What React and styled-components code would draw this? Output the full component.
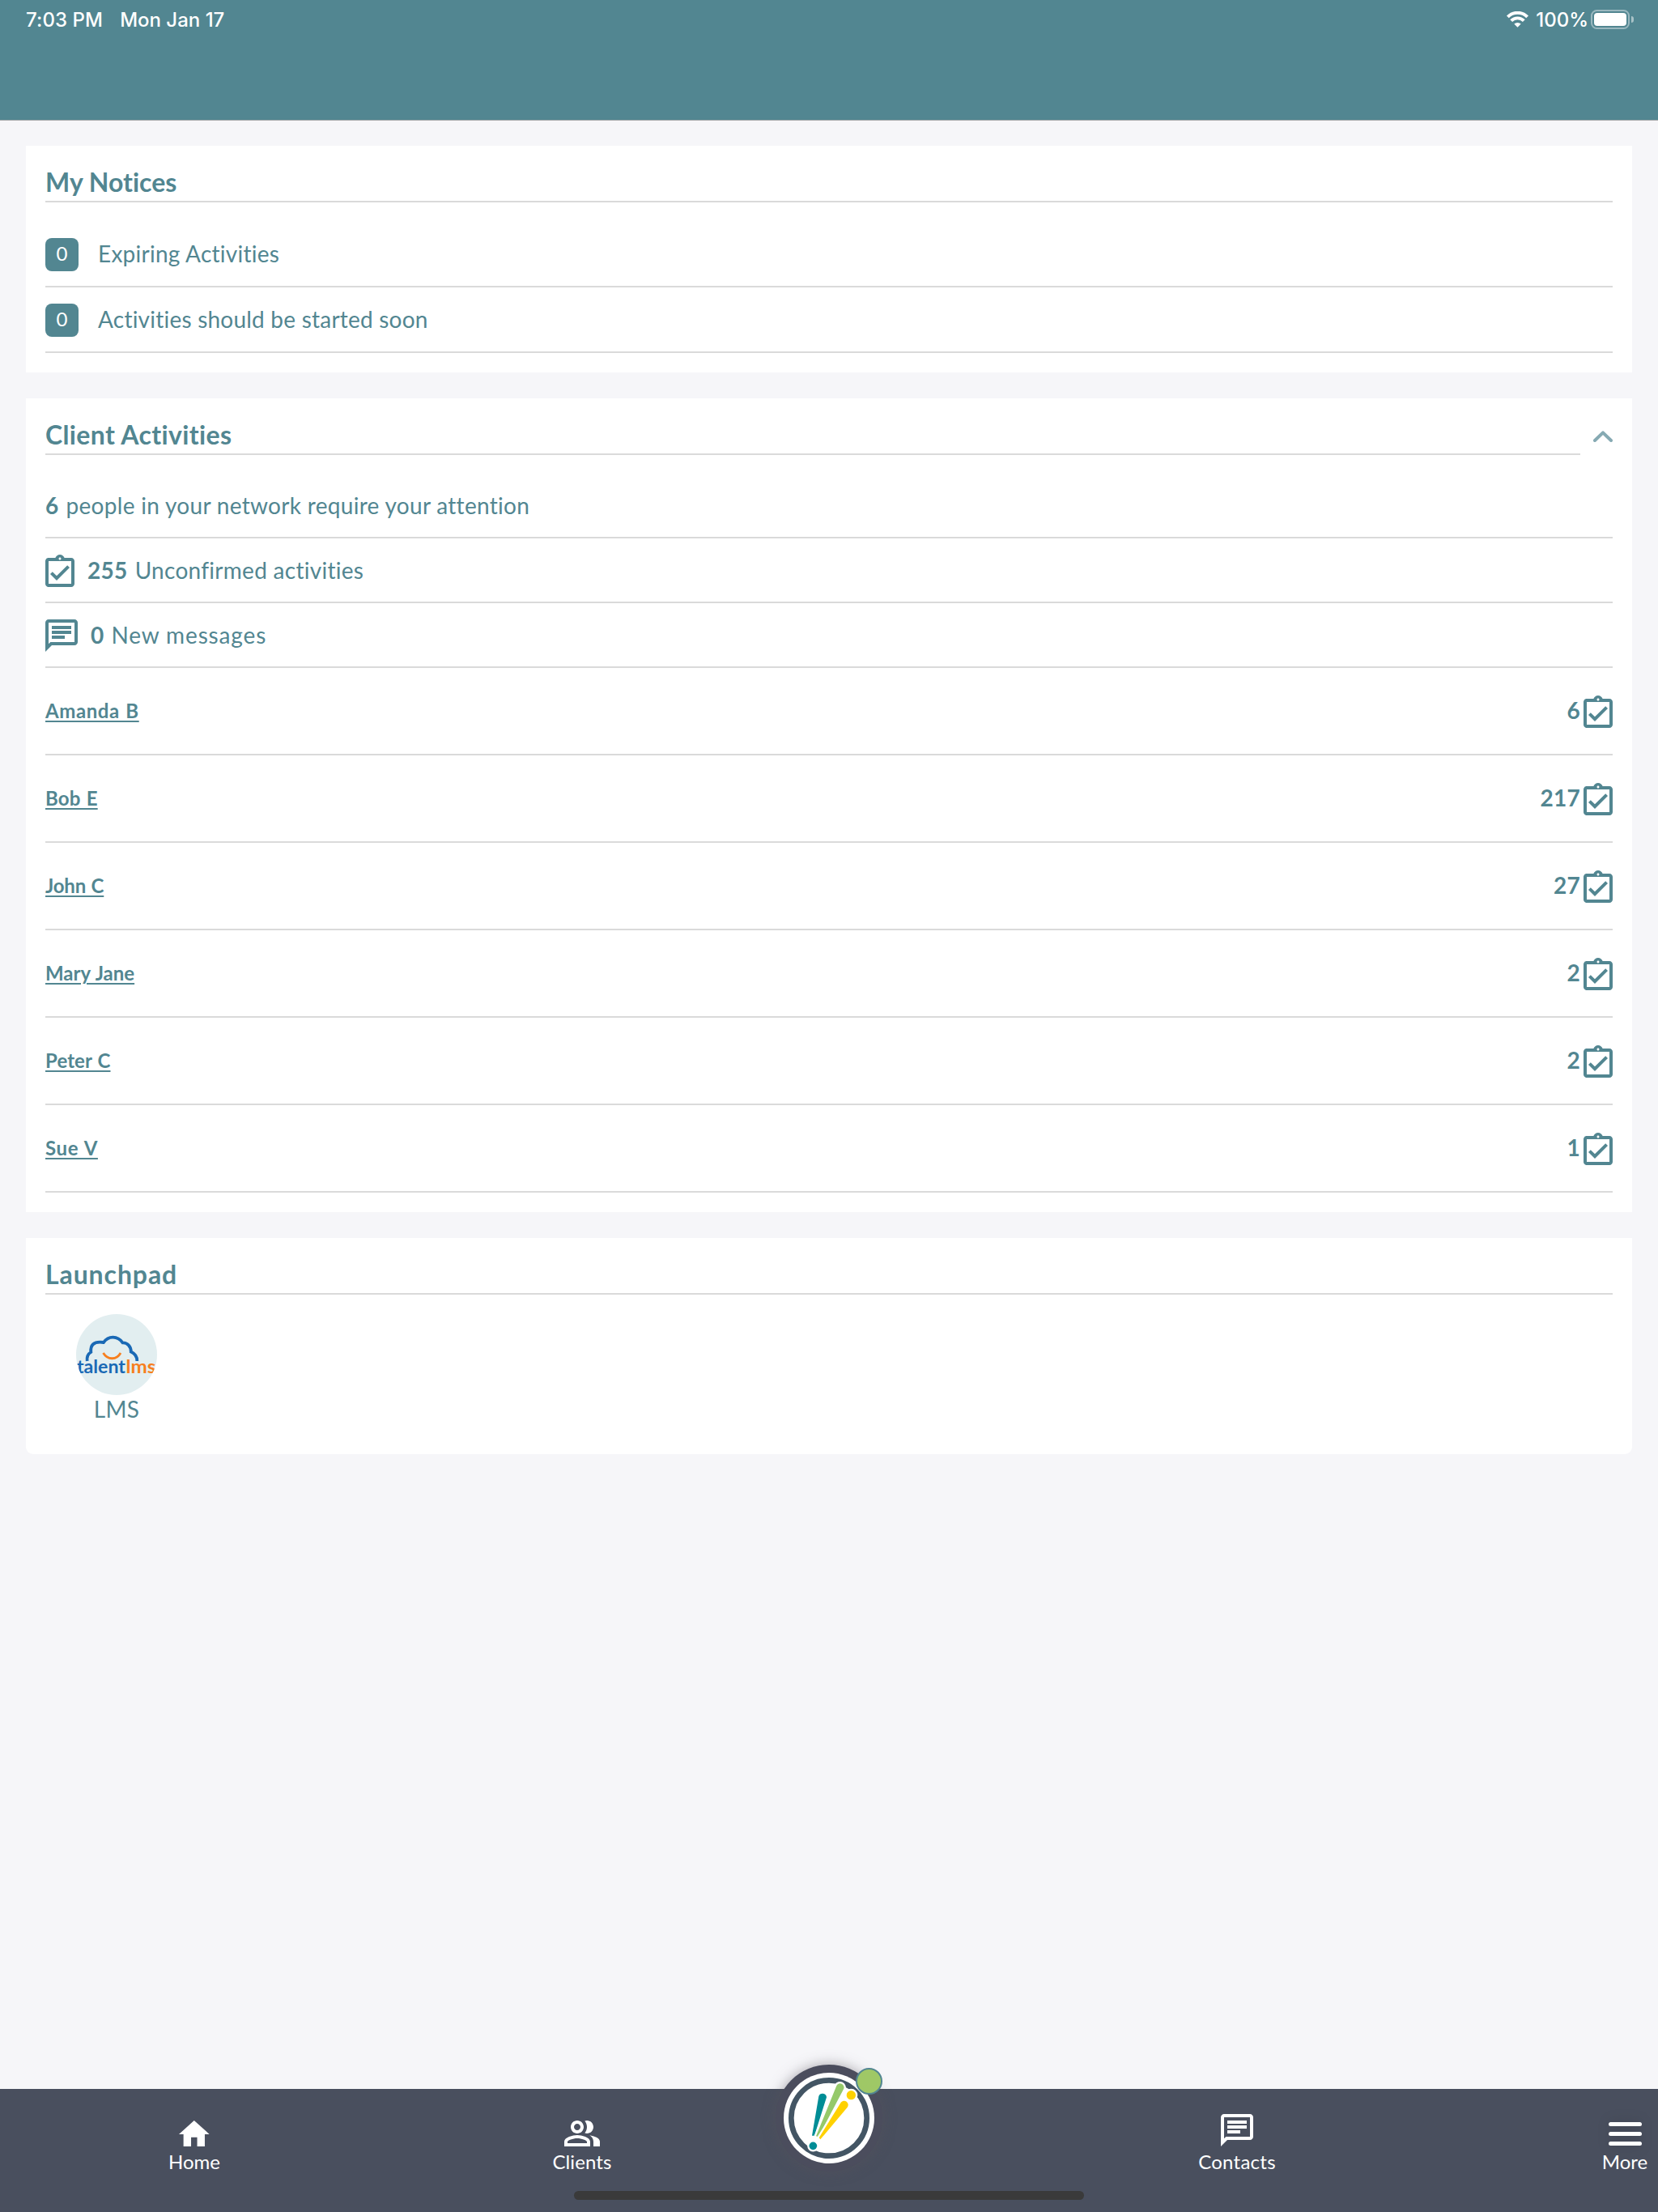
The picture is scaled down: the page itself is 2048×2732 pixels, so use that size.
import React from 'react'
import styled, { createGlobalStyle } from 'styled-components'

const GlobalStyle = createGlobalStyle`
  * {
    box-sizing: border-box;
  }
  body {
    margin: 0;
    background: #f6f6f9;
    color: #528691;
    font-family: Lato, 'Open Sans', sans-serif;
    font-variant-ligatures: none;
  }
`

const Screen = styled.div`
  height: 2732px;
  display: flex;
  flex-direction: column;
  overflow: hidden;
`

const Header = styled.header`
  height: 149px;
  flex: none;
  display: flex;
  justify-content: space-between;
  align-items: flex-start;
  padding: 0 30px 0 32px;
  background: #528691;
  border-bottom: 1px solid #a7a9ab;
  color: white;
`

const Status = styled.div`
  height: 48px;
  display: flex;
  align-items: center;
  font: 500 24px/49px Inter, sans-serif;
`

const StatusText = styled.span`
  height: 48px;
  letter-spacing: ${(p) => p.$track || 0}px;
  margin-right: ${(p) => p.$gap || 0}px;
`

const Wifi = styled.svg`
  width: 27px;
  height: 20px;
  margin-right: 9px;
  fill: white;
  path + path {
    stroke: white;
    stroke-width: 3.9px;
    fill: none;
  }
`

const Battery = styled.div`
  width: 48px;
  height: 24px;
  padding: 2px;
  border: 2px solid rgba(255, 255, 255, 0.42);
  border-radius: 7.5px;
  &::before {
    content: '';
    display: block;
    height: 16px;
    border-radius: 4px;
    background: white;
  }
`

const BatteryTip = styled.div`
  width: 3px;
  height: 8px;
  margin-left: 2px;
  border-radius: 0 4px 4px 0;
  background: rgba(255, 255, 255, 0.5);
`

const Main = styled.main`
  flex: 1;
  display: flex;
  flex-direction: column;
  gap: 32px;
  padding: 31px 32px 0;
`

const Card = styled.section`
  padding: 24px;
  background: white;
  border-radius: ${(p) => (p.$last ? '0 0 9px 9px' : 0)};
`

const CardHeader = styled.div`
  display: flex;
  align-items: flex-start;
  margin-bottom: ${(p) => p.$gap}px;
`

const Title = styled.h2`
  flex: 1;
  height: 46px;
  margin: 0;
  border-bottom: 2px solid #dadada;
  font-size: 32px;
  line-height: 41px;
  letter-spacing: ${(p) => p.$track || 0}px;
`

const Chevron = styled.svg`
  width: 24px;
  height: 14px;
  margin: 16px 0 0 16px;
  fill: none;
  stroke: #86aab3;
  stroke-width: 4px;
  stroke-linecap: round;
  stroke-linejoin: round;
`

const Row = styled.div`
  height: ${(p) => p.$height}px;
  display: flex;
  align-items: flex-start;
  border-bottom: 2px solid #dadada;
`

const Badge = styled.span`
  width: 41px;
  height: 41px;
  margin: 20px 24px 0 0;
  border-radius: 8px;
  background: #528691;
  color: white;
  font-size: 24px;
  line-height: 38px;
  text-align: center;
`

const Text = styled.span`
  font-size: 28px;
  line-height: ${(p) => p.$line}px;
  letter-spacing: ${(p) => p.$track || 0}px;
`

const Count = styled.b`
  margin-right: ${(p) => p.$gap}px;
  font-size: 28px;
  line-height: ${(p) => p.$line}px;
  letter-spacing: 0.3px;
`

const Name = styled.a`
  flex: 1;
  font-size: 24px;
  font-weight: 700;
  line-height: 106px;
  letter-spacing: ${(p) => p.$track}px;
  word-spacing: 1px;
  text-decoration: underline 2px;
  text-underline-offset: 3px;
`

const Glyph = styled.svg`
  flex: none;
  width: ${(p) => p.$w}px;
  height: ${(p) => p.$h}px;
  margin: ${(p) => p.$margin || 0};
  fill: currentColor;
`

const Tile = styled.div`
  width: 176px;
  height: 149px;
  display: flex;
  flex-direction: column;
  align-items: center;
`

const TileLogo = styled.svg`
  width: 100px;
  height: 100px;
  border-radius: 50%;
  background: #e2eef0;
  fill: none;
  font: 700 22.5px Lato, sans-serif;
`

const TabBar = styled.nav`
  position: relative;
  height: 152px;
  flex: none;
  display: grid;
  grid-template-columns: 480px 478px 132px 876px 82px;
  background: #494f5e;
  color: white;
`

const Tab = styled.div`
  display: flex;
  flex-direction: column;
  align-items: center;
`

const TabIcon = styled.div`
  height: 71px;
  display: flex;
  align-items: flex-end;
`

const TabLabel = styled.span`
  font-size: 24px;
  line-height: 38px;
  letter-spacing: ${(p) => p.$track || 0}px;
`

const Bars = styled.div`
  width: 41px;
  height: 30px;
  display: flex;
  flex-direction: column;
  justify-content: space-between;
  padding-bottom: 1px;
  filter: drop-shadow(0 0 8px rgba(0, 0, 0, 0.15));
  i {
    height: 5px;
    border-radius: 2.5px;
    background: white;
  }
`

const Hub = styled.div`
  position: relative;
  width: 132px;
  height: 132px;
  margin-top: -30px;
  border-radius: 50%;
  background: #4b4d5d;
  box-shadow: 0 0 16px rgba(88, 84, 92, 0.5);
  svg {
    display: block;
  }
`

const HubDot = styled.span`
  position: absolute;
  top: 4px;
  right: 0;
  width: 33px;
  height: 33px;
  border: 2px solid #528691;
  border-radius: 50%;
  background: #9fc866;
`

const HomeIndicator = styled.div`
  position: absolute;
  left: 709px;
  bottom: 15px;
  width: 630px;
  height: 11px;
  border-radius: 6px;
  background: #3a3a3a;
`

const ClipboardIcon = ({ margin }) => (
  <Glyph viewBox='3 1 18 20' $w={36} $h={40} $margin={margin}>
    <path d='M18 9l-1.41-1.42L10 14.17l-2.59-2.58L6 13l4 4zm1-6h-4.18C14.4 1.84 13.3 1 12 1c-1.3 0-2.4.84-2.82 2H5c-.14 0-.27.01-.4.04a2.008 2.008 0 0 0-1.44 1.19c-.1.23-.16.49-.16.77v14c0 .27.06.54.16.78s.25.45.43.64c.27.27.62.47 1.01.55.13.02.26.03.4.03h14c1.1 0 2-.9 2-2V5c0-1.1-.9-2-2-2zm-7-.25c.41 0 .75.34.75.75s-.34.75-.75.75-.75-.34-.75-.75.34-.75.75-.75zM19 19H5V5h14v14z' />
  </Glyph>
)

const ChatIcon = ({ margin }) => (
  <Glyph viewBox='2 2 20 20' $w={40} $h={40} $margin={margin}>
    <path d='M4 4h16v12H5.17L4 17.17V4m0-2c-1.1 0-1.99.9-1.99 2L2 22l4-4h14c1.1 0 2-.9 2-2V4c0-1.1-.9-2-2-2H4zm2 10h8v2H6v-2zm0-3h12v2H6V9zm0-3h12v2H6V6z' />
  </Glyph>
)

const HomeIcon = () => (
  <Glyph viewBox='2 3 20 17' $w={37.6} $h={32}>
    <path d='M10 20v-6h4v6h5v-8h3L12 3 2 12h3v8z' />
  </Glyph>
)

const PeopleIcon = () => (
  <Glyph viewBox='1 4 22 16' $w={44} $h={32}>
    <path d='M16.67 13.13C18.04 14.06 19 15.32 19 17v3h4v-3c0-2.18-3.57-3.47-6.33-3.87zM15 12c2.21 0 4-1.79 4-4s-1.79-4-4-4c-.47 0-.91.1-1.33.24C14.5 5.27 15 6.58 15 8s-.5 2.73-1.33 3.76c.42.14.86.24 1.33.24zM9 12c2.21 0 4-1.79 4-4s-1.79-4-4-4-4 1.79-4 4 1.79 4 4 4zm0-6c1.1 0 2 .9 2 2s-.9 2-2 2-2-.9-2-2 .9-2 2-2zM9 13c-2.67 0-8 1.34-8 4v3h16v-3c0-2.66-5.33-4-8-4zm6 5H3v-.99C3.2 16.29 6.3 15 9 15s5.8 1.29 6 2v1z' />
  </Glyph>
)

const HubLogo = () => (
  <svg width='132' height='132' viewBox='54 90 396 396'>
    <circle cx='252' cy='288' r='168' fill='white' />
    <circle cx='252' cy='288' r='140' fill='none' stroke='#435564' strokeWidth='20' />
    <g stroke='white' strokeWidth='14' paintOrder='stroke'>
      <path fill='#008d96' d='M214 207a15 15 0 0 1 29 4L198 353h-9z' />
      <path fill='#95c96a' d='M280 168a14 14 0 0 1 26 13L213 358l-9-3z' />
      <path fill='#ffd100' d='M296 230a15 15 0 0 1 24 18L220 367l-5-6z' />
      <circle fill='#ffd100' cx='334' cy='203' r='17' />
      <circle fill='#008d96' cx='193' cy='391' r='14.5' />
    </g>
  </svg>
)

const notices = [
  { label: 'Expiring Activities', track: 0.25 },
  { label: 'Activities should be started soon', track: 0.22 }
]

const clients = [
  { name: 'Amanda B', count: 6, track: 0.6 },
  { name: 'Bob E', count: 217, track: 0.2 },
  { name: 'John C', count: 27, track: -0.2 },
  { name: 'Mary Jane', count: 2, track: 0 },
  { name: 'Peter C', count: 2, track: 0.1 },
  { name: 'Sue V', count: 1, track: 0.6 }
]

export default () => (
  <Screen>
    <GlobalStyle />
    <Header>
      <Status>
        <StatusText $gap={21} $track={0.1}>7:03 PM</StatusText>
        <StatusText>Mon Jan 17</StatusText>
      </Status>
      <Status>
        <Wifi viewBox='0 0 27 20'>
          <path d='M13.5 19.8L9.3 15.6A6 6 0 0 1 17.7 15.6z' />
          <path d='M1.4 6.8A17 17 0 0 1 25.6 6.8' />
          <path d='M5.7 11.7A10.8 10.8 0 0 1 21.3 11.7' />
        </Wifi>
        <StatusText $gap={3}>100%</StatusText>
        <Battery />
        <BatteryTip />
      </Status>
    </Header>
    <Main>
      <Card>
        <CardHeader $gap={24}>
          <Title>My Notices</Title>
        </CardHeader>
        {notices.map((n) => (
          <Row key={n.label} $height={81}>
            <Badge>0</Badge>
            <Text $line={78} $track={n.track}>{n.label}</Text>
          </Row>
        ))}
      </Card>
      <Card>
        <CardHeader $gap={23}>
          <Title $track={0.36}>Client Activities</Title>
          <Chevron viewBox='0 0 24 14'>
            <path d='M2 12L12 2.4L22 12' />
          </Chevron>
        </CardHeader>
        <Row $height={80}>
          <Count $line={78} $gap={9}>6</Count>
          <Text $line={78} $track={0.3}>people in your network require your attention</Text>
        </Row>
        <Row $height={80}>
          <ClipboardIcon margin='20px 16px 0 0' />
          <Count $line={78} $gap={9}>255</Count>
          <Text $line={78} $track={0.28}>Unconfirmed activities</Text>
        </Row>
        <Row $height={80}>
          <ChatIcon margin='20px 16px 0 0' />
          <Count $line={78} $gap={9}>0</Count>
          <Text $line={78} $track={0.85}>New messages</Text>
        </Row>
        {clients.map((c) => (
          <Row key={c.name} $height={108}>
            <Name $track={c.track}>{c.name}</Name>
            <Count $line={104} $gap={4}>{c.count}</Count>
            <ClipboardIcon margin='34px 0 0' />
          </Row>
        ))}
      </Card>
      <Card $last>
        <CardHeader $gap={24}>
          <Title $track={0.9}>Launchpad</Title>
        </CardHeader>
        <Tile>
          <TileLogo viewBox='0 0 100 100'>
            <path
              stroke='#1a69b5'
              strokeWidth='3.8'
              d='M13.7 58C13 53 15 49 18.3 47C17.5 39 21 33 34 35C40 26.5 51 26.5 57.5 35.3C63 35 68 40 67.8 46.5C73 49 75.5 53 75.3 58'
            />
            <path stroke='#f77f1e' strokeWidth='2.8' d='M33.5 48C39 57 50 57 55 48' />
            <text x='1' y='72.5' fill='#1a69b5' textLength='60' lengthAdjust='spacingAndGlyphs'>talent</text>
            <text x='61.5' y='72.5' fill='#f77f1e' textLength='37' lengthAdjust='spacingAndGlyphs'>lms</text>
          </TileLogo>
          <Text $line={35} $track={0.3}>LMS</Text>
        </Tile>
      </Card>
    </Main>
    <TabBar>
      <Tab>
        <TabIcon><HomeIcon /></TabIcon>
        <TabLabel>Home</TabLabel>
      </Tab>
      <Tab>
        <TabIcon><PeopleIcon /></TabIcon>
        <TabLabel $track={0.1}>Clients</TabLabel>
      </Tab>
      <Hub>
        <HubLogo />
        <HubDot />
      </Hub>
      <Tab>
        <TabIcon><ChatIcon /></TabIcon>
        <TabLabel $track={0.26}>Contacts</TabLabel>
      </Tab>
      <Tab>
        <TabIcon>
          <Bars>
            <i />
            <i />
            <i />
          </Bars>
        </TabIcon>
        <TabLabel>More</TabLabel>
      </Tab>
      <HomeIndicator />
    </TabBar>
  </Screen>
)
